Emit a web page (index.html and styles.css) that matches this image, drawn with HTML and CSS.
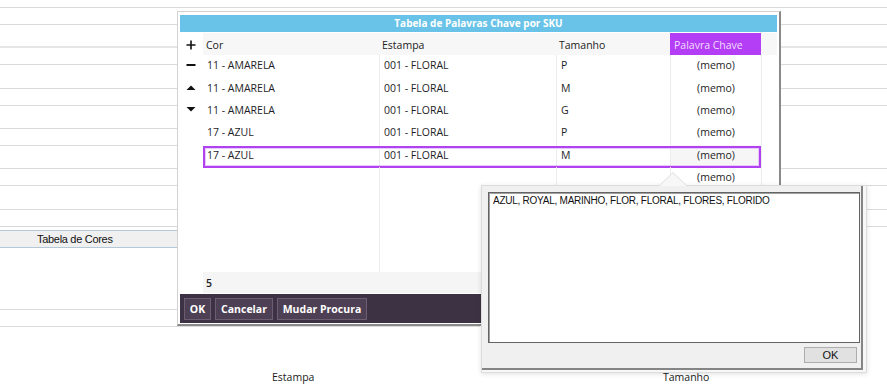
FILE: index.html
```html
<!DOCTYPE html>
<html lang="pt">
<head>
<meta charset="utf-8">
<title>Tabela de Palavras Chave por SKU</title>
<link rel="stylesheet" href="styles.css">
</head>
<body>
<div class="backdrop">
  <div class="pane pane-left">
    <div class="field"></div>
    <div class="field"></div>
    <div class="field"></div>
    <div class="field"></div>
    <div class="field"></div>
    <div class="field"></div>
    <div class="sec-head">Tabela de Cores</div>
    <div class="field field-low"></div>
    <div class="caption caption-left">Estampa</div>
  </div>
  <div class="pane pane-right">
    <div class="field"></div>
    <div class="field"></div>
    <div class="field"></div>
    <div class="field field-hidden"></div>
    <div class="field"></div>
    <div class="field"></div>
    <div class="caption caption-right">Tamanho</div>
  </div>
</div>

<div class="dialog">
  <div class="title">Tabela de Palavras Chave por SKU</div>
  <div class="grid">
    <div class="row head">
      <div class="c ico"><svg width="10" height="10" viewBox="0 0 10 10"><path d="M5 0.5V9.5M0.5 5H9.5" stroke="#111" stroke-width="1.6"/></svg></div>
      <div class="c hc">Cor</div>
      <div class="c hc">Estampa</div>
      <div class="c hc">Tamanho</div>
      <div class="c hc hot">Palavra Chave</div>
      <div class="c hc"></div>
    </div>
    <div class="row">
      <div class="c ico"><svg width="10" height="10" viewBox="0 0 10 10"><rect x="0.5" y="4" width="9" height="2" fill="#111"/></svg></div>
      <div class="c">11 - AMARELA</div>
      <div class="c ln">001 - FLORAL</div>
      <div class="c ln">P</div>
      <div class="c ln memo">(memo)</div>
      <div class="c ln"></div>
    </div>
    <div class="row">
      <div class="c ico"><svg width="10" height="10" viewBox="0 0 10 10"><path d="M0.5 7H9.5L5 2.5Z" fill="#111"/></svg></div>
      <div class="c">11 - AMARELA</div>
      <div class="c ln">001 - FLORAL</div>
      <div class="c ln">M</div>
      <div class="c ln memo">(memo)</div>
      <div class="c ln"></div>
    </div>
    <div class="row">
      <div class="c ico"><svg width="10" height="10" viewBox="0 0 10 10"><path d="M0.5 2H9.5L5 6.5Z" fill="#111"/></svg></div>
      <div class="c">11 - AMARELA</div>
      <div class="c ln">001 - FLORAL</div>
      <div class="c ln">G</div>
      <div class="c ln memo">(memo)</div>
      <div class="c ln"></div>
    </div>
    <div class="row">
      <div class="c ico"></div>
      <div class="c">17 - AZUL</div>
      <div class="c ln">001 - FLORAL</div>
      <div class="c ln">P</div>
      <div class="c ln memo">(memo)</div>
      <div class="c ln"></div>
    </div>
    <div class="row selected">
      <div class="c ico"></div>
      <div class="c">17 - AZUL</div>
      <div class="c ln">001 - FLORAL</div>
      <div class="c ln">M</div>
      <div class="c ln memo sel-memo">(memo)</div>
      <div class="c ln"></div>
    </div>
    <div class="row">
      <div class="c ico"></div>
      <div class="c"></div>
      <div class="c ln"></div>
      <div class="c ln"></div>
      <div class="c ln memo">(memo)</div>
      <div class="c ln"></div>
    </div>
    <div class="row filler">
      <div class="c ico"></div>
      <div class="c"></div>
      <div class="c ln"></div>
      <div class="c ln"></div>
      <div class="c ln"></div>
      <div class="c ln"></div>
    </div>
    <div class="row foot">
      <div class="c ico"></div>
      <div class="c fc count">5</div>
      <div class="c fc"></div>
      <div class="c fc"></div>
      <div class="c fc"></div>
      <div class="c fc"></div>
    </div>
  </div>
  <div class="bar">
    <button class="btn btn-ok">OK</button>
    <button class="btn btn-cancel">Cancelar</button>
    <button class="btn btn-search">Mudar Procura</button>
  </div>
</div>

<div class="popup">
  <svg class="pointer" width="30" height="15" viewBox="0 0 30 15"><path d="M1 15L15 1.5L29 15" fill="#f7f7f7" stroke="#dedede" stroke-width="1"/></svg>
  <div class="panel">
    <div class="memo-box">AZUL, ROYAL, MARINHO, FLOR, FLORAL, FLORES, FLORIDO</div>
    <div class="memo-actions">
      <button class="ok">OK</button>
    </div>
  </div>
</div>
</body>
</html>
```

FILE: styles.css
```css
html, body {
  margin: 0;
  padding: 0;
}
body {
  width: 887px;
  height: 384px;
  overflow: hidden;
  position: relative;
  background: #ffffff;
  font-family: "Open Sans", "Noto Sans", sans-serif;
  font-size: 10.5px;
  color: #1d1d26;
}

/* ---------- backdrop form ---------- */
.backdrop {
  display: grid;
  grid-template-columns: 480px 407px;
  height: 384px;
}
.pane {
  display: flex;
  flex-direction: column;
}
.field {
  height: 16px;
  border-top: 1px solid #dadada;
  border-bottom: 1px solid #dadada;
  margin-top: 22px;
}
.field:first-child { margin-top: 7px; }
.field:nth-child(3), .field:nth-child(6) { margin-top: 23px; }
.field:nth-child(2) { border-top: 2px solid #e6e6e6; margin-top: 21px; }
.field-hidden { visibility: hidden; }
.sec-head {
  margin-top: 3px;
  height: 16px;
  line-height: 16px;
  background: #f0f0f0;
  border-top: 1px solid #b5c8d8;
  border-bottom: 1px solid #b5c8d8;
  padding-left: 37px;
  font-family: "Liberation Sans", sans-serif;
  font-size: 11px;
  color: #111;
  letter-spacing: -0.3px;
}
.field-low { margin-top: 61px; }
.caption {
  line-height: 14px;
  font-size: 10.5px;
  color: #1a1a1a;
}
.caption-left { margin-top: 43px; padding-left: 272px; }
.caption-right { margin-top: 143px; padding-left: 183px; }

/* ---------- dialog ---------- */
.dialog {
  position: absolute;
  left: 177px;
  top: 11px;
  width: 604px;
  height: 315px;
  box-sizing: border-box;
  background: #ffffff;
  border-left: 1px solid #d2d2d2;
  border-top: 1px solid #d2d2d2;
  border-right: 2px solid #8a8a8a;
  border-bottom: 2px solid #8a8a8a;
  padding: 3px 2px 1px 2px;
  display: flex;
  flex-direction: column;
}
.title {
  height: 17px;
  line-height: 17px;
  background: #69c3e8;
  color: #ffffff;
  font-weight: 700;
  font-size: 10px;
  text-align: center;
  margin-bottom: 1px;
}
.grid {
  height: 260px;
  display: flex;
  flex-direction: column;
}
.row {
  display: grid;
  grid-template-columns: 23px 176px 177px 114px 91px 16px;
  height: 22.4px;
  position: relative;
}
.row.head { height: 22px; }
.c {
  box-sizing: border-box;
  padding-left: 4px;
  display: flex;
  align-items: center;
  padding-bottom: 2px;
  white-space: nowrap;
}
.ln { border-left: 1px solid #ececec; }
.ico {
  justify-content: center;
  padding-left: 0;
  padding-right: 2px;
}
.head .c { padding-bottom: 0; padding-top: 1px; }
.hc {
  background: #f7f7f7;
  padding-left: 3px;
  color: #222;
}
.hot {
  background: #b33ef5;
  color: #f2ddff;
  padding-left: 4px;
}
.memo {
  justify-content: center;
  padding-left: 0;
}
.selected::after {
  content: "";
  position: absolute;
  left: 23px;
  right: 16px;
  top: 1px;
  bottom: -1px;
  border: 2px solid #b142f2;
  box-shadow: inset 0 0 0 1px #e9c9fb;
  pointer-events: none;
}
.sel-memo { background: #f6f6f6; }
.filler { flex: 1; height: auto; }
.foot { height: 21px; }
.foot .c { padding-bottom: 0; }
.fc { background: #f5f5f5; }
.count { padding-left: 3px; font-weight: 600; }

.bar {
  margin-top: 1px;
  height: 29px;
  box-sizing: border-box;
  background: #3d3243;
  padding: 4px 4px 0 4px;
  display: flex;
  gap: 4px;
  align-items: flex-start;
}
.btn {
  height: 22px;
  margin: 0;
  padding: 0;
  background: #4d4054;
  border: 1px solid #6b5e71;
  color: #ffffff;
  font-family: "Open Sans", "Noto Sans", sans-serif;
  font-size: 10.5px;
  font-weight: 700;
  text-align: center;
}
.btn-ok { width: 27px; }
.btn-cancel { width: 58px; }
.btn-search { width: 90px; }

/* ---------- memo popup ---------- */
.popup {
  position: absolute;
  left: 481px;
  top: 185px;
  width: 386px;
  height: 188px;
  box-sizing: border-box;
  background: #f7f7f7;
  border: 1px solid #dcdcdc;
  box-shadow: 0 1px 5px rgba(0, 0, 0, 0.12);
}
.pointer {
  position: absolute;
  left: 176px;
  top: -15px;
}
.panel {
  width: 381px;
  height: 184px;
  box-sizing: border-box;
  background: #f0f0f0;
  border-right: 2px solid #858585;
  border-bottom: 2px solid #858585;
  padding: 6px 0 0 6px;
  display: flex;
  flex-direction: column;
}
.memo-box {
  width: 372px;
  height: 151px;
  box-sizing: border-box;
  background: #ffffff;
  border: 1px solid #646464;
  box-shadow: inset 1px 1px 0 #a0a0a0;
  padding: 1px 4px;
  font-family: "Liberation Sans", sans-serif;
  font-size: 10px;
  letter-spacing: -0.25px;
  color: #111;
  line-height: 14px;
}
.memo-actions {
  width: 372px;
  display: flex;
  justify-content: flex-end;
  padding-top: 4px;
}
.ok {
  width: 53px;
  height: 16px;
  margin: 0 3px 0 0;
  padding: 0;
  background: #e1e1e1;
  border: 1px solid #adadad;
  font-family: "Liberation Sans", sans-serif;
  font-size: 11px;
  color: #111;
  line-height: 14px;
}
```
